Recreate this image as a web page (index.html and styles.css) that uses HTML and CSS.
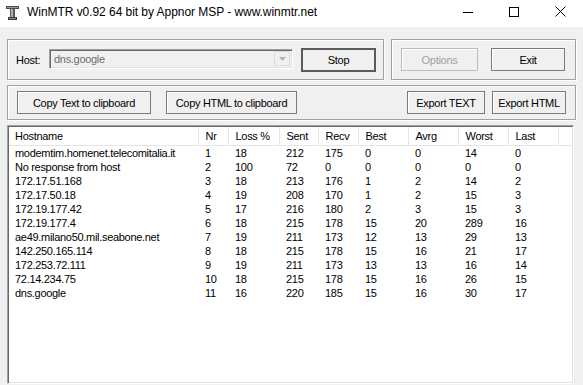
FILE: index.html
```html
<!DOCTYPE html>
<html>
<head>
<meta charset="utf-8">
<link rel="stylesheet" href="styles.css">
</head>
<body>
<div class="window">
  <div class="titlebar">
    <svg class="appicon" width="13" height="14" viewBox="0 0 13 14">
      <rect x="0" y="0" width="13" height="3" fill="#4a4a4a"/>
      <rect x="1" y="1" width="11" height="1" fill="#9a9a9a"/>
      <rect x="4" y="3" width="5" height="8" fill="#5a5a5a"/>
      <rect x="5" y="3" width="2" height="8" fill="#b0b0b0"/>
      <rect x="2" y="11" width="9" height="3" fill="#3a3a3a"/>
      <rect x="3" y="12" width="7" height="1" fill="#8a8a8a"/>
    </svg>
    <span class="title">WinMTR v0.92 64 bit by Appnor MSP - www.winmtr.net</span>
    <div class="controls">
      <span class="ctl"><svg width="10" height="10" viewBox="0 0 10 10"><line x1="0" y1="5.5" x2="10" y2="5.5" stroke="#000" stroke-width="1"/></svg></span>
      <span class="ctl"><svg width="10" height="10" viewBox="0 0 10 10"><rect x="0.5" y="0.5" width="9" height="9" fill="none" stroke="#000" stroke-width="1"/></svg></span>
      <span class="ctl"><svg width="11" height="11" viewBox="0 0 11 11"><path d="M0.5 0.5 L10.5 10.5 M10.5 0.5 L0.5 10.5" stroke="#000" stroke-width="1"/></svg></span>
    </div>
  </div>
  <div class="client">
    <div class="row1">
      <div class="group g-host">
        <span class="lbl">Host:</span>
        <div class="combo">
          <span class="combo-text">dns.google</span>
          <span class="combo-btn"><svg width="7" height="4" viewBox="0 0 7 4"><path d="M0 0 H7 L3.5 4 Z" fill="#b4b4b4"/></svg></span>
        </div>
        <button class="btn default stop">Stop</button>
      </div>
      <div class="group g-ctl">
        <button class="btn disabled options">Options</button>
        <button class="btn exit">Exit</button>
      </div>
    </div>
    <div class="group g-export">
      <button class="btn copytext">Copy Text to clipboard</button>
      <button class="btn copyhtml">Copy HTML to clipboard</button>
      <span class="spacer"></span>
      <button class="btn exptext">Export TEXT</button>
      <button class="btn exphtml">Export HTML</button>
    </div>
    <div class="list">
      <table>
        <colgroup>
          <col class="c-host"><col class="c-nr"><col class="c-loss"><col class="c-sent"><col class="c-recv"><col class="c-best"><col class="c-avrg"><col class="c-worst"><col class="c-last"><col>
        </colgroup>
        <thead>
          <tr><th>Hostname</th><th>Nr</th><th>Loss %</th><th>Sent</th><th>Recv</th><th>Best</th><th>Avrg</th><th>Worst</th><th>Last</th><th class="fill"></th></tr>
        </thead>
        <tbody>
          <tr><td>modemtim.homenet.telecomitalia.it</td><td>1</td><td>18</td><td>212</td><td>175</td><td>0</td><td>0</td><td>14</td><td>0</td><td></td></tr>
          <tr><td>No response from host</td><td>2</td><td>100</td><td>72</td><td>0</td><td>0</td><td>0</td><td>0</td><td>0</td><td></td></tr>
          <tr><td>172.17.51.168</td><td>3</td><td>18</td><td>213</td><td>176</td><td>1</td><td>2</td><td>14</td><td>2</td><td></td></tr>
          <tr><td>172.17.50.18</td><td>4</td><td>19</td><td>208</td><td>170</td><td>1</td><td>2</td><td>15</td><td>3</td><td></td></tr>
          <tr><td>172.19.177.42</td><td>5</td><td>17</td><td>216</td><td>180</td><td>2</td><td>3</td><td>15</td><td>3</td><td></td></tr>
          <tr><td>172.19.177.4</td><td>6</td><td>18</td><td>215</td><td>178</td><td>15</td><td>20</td><td>289</td><td>16</td><td></td></tr>
          <tr><td>ae49.milano50.mil.seabone.net</td><td>7</td><td>19</td><td>211</td><td>173</td><td>12</td><td>13</td><td>29</td><td>13</td><td></td></tr>
          <tr><td>142.250.165.114</td><td>8</td><td>18</td><td>215</td><td>178</td><td>15</td><td>16</td><td>21</td><td>17</td><td></td></tr>
          <tr><td>172.253.72.111</td><td>9</td><td>19</td><td>211</td><td>173</td><td>13</td><td>13</td><td>16</td><td>14</td><td></td></tr>
          <tr><td>72.14.234.75</td><td>10</td><td>18</td><td>215</td><td>178</td><td>15</td><td>16</td><td>26</td><td>15</td><td></td></tr>
          <tr><td>dns.google</td><td>11</td><td>16</td><td>220</td><td>185</td><td>15</td><td>16</td><td>30</td><td>17</td><td></td></tr>
        </tbody>
      </table>
    </div>
  </div>
</div>
</body>
</html>
```
FILE: styles.css
```css
* { box-sizing: border-box; }
html, body { margin: 0; padding: 0; }
body {
  width: 583px;
  height: 385px;
  overflow: hidden;
  background: #f0f0f0;
  font-family: "Liberation Sans", Arial, sans-serif;
  font-size: 11px;
  letter-spacing: -0.3px;
  color: #000;
}
.window { width: 583px; height: 385px; background: #f0f0f0; }

.titlebar {
  height: 27px;
  background: #fff;
  display: flex;
  align-items: center;
  padding-left: 6px;
}
.appicon { display: block; margin-top: -2px; }
.title {
  margin-left: 8px;
  font-size: 12px;
  letter-spacing: -0.05px;
  margin-top: -3px;
  color: #000;
}
.controls { margin-left: auto; display: flex; height: 27px; }
.ctl {
  width: 46px;
  display: flex;
  align-items: center;
  justify-content: center;
  margin-top: -4px;
}

.client { padding: 12px 7px 0 7px; }
.row1 { display: flex; gap: 7px; }

.group {
  border: 1px solid #a0a0a0;
  box-shadow: inset 1px 1px 0 #fff, 1px 1px 0 #fff;
  display: flex;
  align-items: center;
}
.g-host { width: 377px; height: 41px; padding-left: 8px; }
.g-ctl { width: 185px; height: 41px; padding-left: 9px; gap: 13px; }
.g-export { margin-top: 5px; height: 35px; padding-left: 9px; padding-right: 9px; }
.spacer { flex: 1; }

.lbl { width: 33px; }
.combo {
  width: 244px;
  height: 20px;
  margin-top: -2px;
  background: #f0f0f0;
  border: 1px solid;
  border-color: #a0a0a0 #fff #fff #a0a0a0;
  box-shadow: inset 1px 1px 0 #696969, inset -1px -1px 0 #e3e3e3;
  display: flex;
  align-items: center;
  padding-left: 4px;
  padding-right: 2px;
}
.combo-text { color: #6d6d6d; flex: 1; }
.combo-btn {
  width: 16px;
  height: 15px;
  border: 1px solid #dcdcdc;
  background: #f0f0f0;
  display: flex;
  align-items: center;
  justify-content: center;
}

.btn {
  font-family: inherit;
  font-size: 11px;
  letter-spacing: -0.3px;
  color: #000;
  background: #f0f0f0;
  border: 1px solid #7a7a7a;
  box-shadow: inset 1px 1px 0 #fff;
  height: 23px;
  padding: 0;
  margin: 0;
}
.btn.default { border: 2px solid #5a5a5a; box-shadow: none; height: 24px; }
.btn.disabled { color: #a0a0a0; border-color: #bcbcbc; }
.stop { width: 75px; margin-left: 8px; }
.options { width: 77px; }
.exit { width: 74px; }
.copytext { width: 134px; }
.copyhtml { width: 131px; margin-left: 15px; }
.exptext { width: 78px; }
.exphtml { width: 74px; margin-left: 7px; }

.list {
  margin-top: 5px;
  width: 567px;
  height: 259px;
  background: #fff;
  border: 1px solid;
  border-color: #a0a0a0 #fff #fff #a0a0a0;
  box-shadow: inset 1px 1px 0 #696969, inset -1px -1px 0 #e3e3e3;
  padding: 1px;
  overflow: hidden;
}
table {
  width: 100%;
  border-collapse: collapse;
  table-layout: fixed;
}
.c-host { width: 189px; }
.c-nr { width: 30px; }
.c-loss { width: 51px; }
.c-sent { width: 39px; }
.c-recv { width: 40px; }
.c-best { width: 50px; }
.c-avrg { width: 50px; }
.c-worst { width: 50px; }
.c-last { width: 50px; }

th {
  height: 18px;
  font-weight: normal;
  text-align: left;
  padding: 1px 0 0 7px;
  border-right: 1px solid #e5e5e5;
  border-bottom: 1px solid #e5e5e5;
  white-space: nowrap;
  overflow: hidden;
}
th:first-child { padding-left: 6px; }
th.fill { border-right: none; }
td {
  height: 14px;
  line-height: 14px;
  padding: 0 0 0 7px;
  white-space: nowrap;
  overflow: hidden;
}
td:first-child { padding-left: 6px; }
```
